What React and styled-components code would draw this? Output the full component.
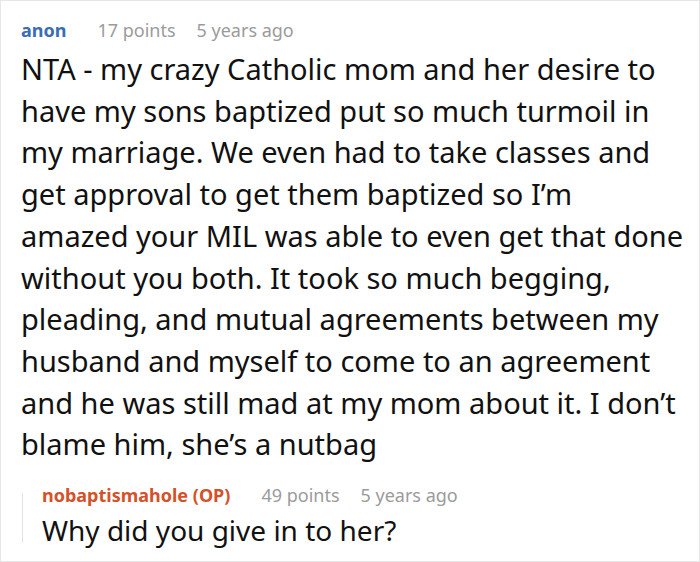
import styled, { createGlobalStyle } from 'styled-components';

const GlobalStyle = createGlobalStyle`
  html, body {
    margin: 0;
    padding: 0;
    background: #fff;
  }
  body {
    font-family: "Noto Sans", "Open Sans", sans-serif;
  }
`;

const comment = {
  author: 'anon',
  points: 17,
  time: '5 years ago',
  lines: [
    'NTA - my crazy Catholic mom and her desire to',
    'have my sons baptized put so much turmoil in',
    'my marriage. We even had to take classes and',
    'get approval to get them baptized so I\u2019m',
    'amazed your MIL was able to even get that done',
    'without you both. It took so much begging,',
    'pleading, and mutual agreements between my',
    'husband and myself to come to an agreement',
    'and he was still mad at my mom about it. I don\u2019t',
    'blame him, she\u2019s a nutbag',
  ],
};

const reply = {
  author: 'nobaptismahole (OP)',
  points: 49,
  time: '5 years ago',
  text: 'Why did you give in to her?',
};

const Card = styled.div`
  box-sizing: border-box;
  width: 700px;
  height: 562px;
  border: 1px solid #e6e6e6;
  padding: 16px 12px 0 20px;
  overflow: hidden;
`;

const Meta = styled.div`
  display: flex;
  align-items: baseline;
  font-size: 18px;
  line-height: 26px;
  white-space: nowrap;
`;

const Author = styled.span`
  font-weight: 700;
  color: ${(p) => (p.$op ? '#d4522a' : '#3b6cb7')};
  margin-right: 31px;
`;

const Info = styled.span`
  color: #9b9b9b;
  margin-right: 21px;
`;

const Body = styled.div`
  margin-top: 5px;
  font-size: 29px;
  line-height: 41.7px;
  color: #111;
`;

const Line = styled.span`
  display: block;
  white-space: nowrap;
`;

const Reply = styled.div`
  position: relative;
  margin-top: 17px;
  padding-left: 21px;

  &::before {
    content: '';
    position: absolute;
    left: 1px;
    top: 11px;
    bottom: 6px;
    width: 1px;
    background: #e3e3e3;
  }
`;

const ReplyText = styled.div`
  margin-top: 3px;
  font-size: 28px;
  line-height: 38px;
  color: #111;
`;

const App = () => {
  return (
    <>
      <GlobalStyle />
      <Card>
        <Meta>
          <Author>{comment.author}</Author>
          <Info>{comment.points} points</Info>
          <Info>{comment.time}</Info>
        </Meta>
        <Body>
          {comment.lines.map((l, i) => (
            <Line key={i}>{l}</Line>
          ))}
        </Body>
        <Reply>
          <Meta>
            <Author $op>{reply.author}</Author>
            <Info>{reply.points} points</Info>
            <Info>{reply.time}</Info>
          </Meta>
          <ReplyText>{reply.text}</ReplyText>
        </Reply>
      </Card>
    </>
  );
};

export default App;
